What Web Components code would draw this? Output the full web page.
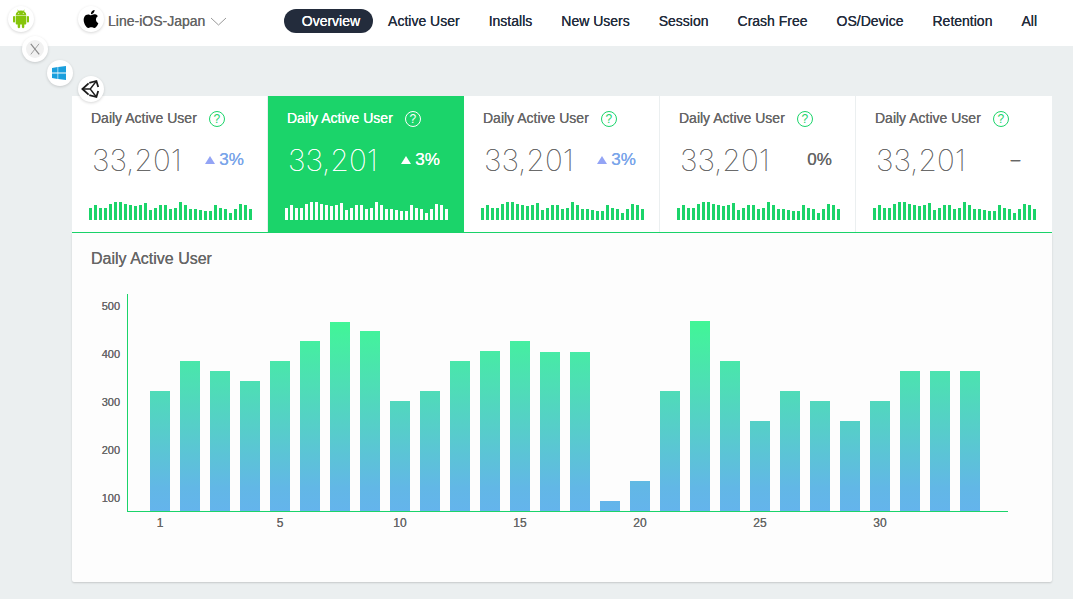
<!DOCTYPE html>
<html lang="en">
<head>
<meta charset="utf-8">
<meta name="viewport" content="width=device-width, initial-scale=1">
<title>Analytics Overview</title>
<style>
  body { margin: 0; min-height: 100vh; background: #ebeff0; color: #666; font-family: "Liberation Sans", Arial, sans-serif; font-size: 14px; text-shadow: 0 0 0 currentColor; }
</style>
</head>
<body>
<analytics-app></analytics-app>

<script>
const define = (name, html, init) => {
  const template = document.createElement('template');
  template.innerHTML = html;
  customElements.define(name, class extends HTMLElement {
    constructor() {
      super();
      this.attachShadow({ mode: 'open' }).append(template.content.cloneNode(true));
    }
    connectedCallback() { if (init) init(this, this.shadowRoot); }
  });
};

const ICONS = {
  Android: `<svg width="18" height="20" viewBox="0 0 18 20" fill="#86c50b">
    <path d="M3.7 6.4a5.3 5 0 0 1 10.6 0z"/>
    <path d="M5.7 .8l1.2 2M12.3 .8l-1.2 2" stroke="#86c50b" stroke-width=".7"/>
    <circle cx="6.7" cy="4.3" r=".55" fill="#fff"/><circle cx="11.3" cy="4.3" r=".55" fill="#fff"/>
    <path d="M3.7 7h10.6v7.6a1 1 0 0 1-1 1H4.7a1 1 0 0 1-1-1z"/>
    <rect x="1" y="7" width="2.1" height="6.6" rx="1"/><rect x="14.9" y="7" width="2.1" height="6.6" rx="1"/>
    <rect x="5.7" y="13" width="2.4" height="6.2" rx="1.1"/><rect x="9.9" y="13" width="2.4" height="6.2" rx="1.1"/></svg>`,
  Apple: `<svg width="18" height="18" viewBox="0 0 24 24"><path d="M12.152 6.896c-.948 0-2.415-1.078-3.96-1.04-2.04.027-3.91 1.183-4.961 3.014-2.117 3.675-.546 9.103 1.519 12.09 1.013 1.454 2.208 3.09 3.792 3.039 1.52-.065 2.09-.987 3.935-.987 1.831 0 2.35.987 3.96.948 1.637-.026 2.676-1.48 3.676-2.948 1.156-1.688 1.636-3.325 1.662-3.415-.039-.013-3.182-1.221-3.22-4.857-.026-3.04 2.48-4.494 2.597-4.559-1.429-2.09-3.623-2.324-4.39-2.376-2-.156-3.675 1.09-4.61 1.09zM15.53 3.83c.843-1.012 1.4-2.427 1.245-3.83-1.207.052-2.662.805-3.532 1.818-.78.896-1.454 2.338-1.273 3.714 1.338.104 2.715-.688 3.559-1.701"/></svg>`,
  'OS X': `<svg width="18" height="18" viewBox="0 0 18 18"><circle cx="9" cy="9" r="9" fill="#f1f1f1"/><path d="M4.8 3.8L13.2 14.4" stroke="#888" stroke-width="1.2"/><path d="M13 3.8L4.8 14.4" stroke="#999" stroke-width=".9"/></svg>`,
  Windows: `<svg width="16" height="16" viewBox="0 0 16 16" fill="#1a9fdd"><path d="M0 3l5.6-.9v5.5H0zM6.2 2L14 1v6.6H6.2zM0 8.4h5.6v5.5L0 13.1zM6.2 8.4H14V15l-7.8-1z"/></svg>`,
  Unity: `<svg width="20" height="20" viewBox="0 0 20 20" fill="none" stroke="#1b1b1b" stroke-width="1.8"><path d="M8.3 3.8L15.4 2l1.8 6M17.2 12l-1.8 6-7.1-1.8M7.6 4.4L1.4 10l6.2 5.6"/><path d="M1.4 10h7.8M15.2 2.2L9.2 10l6 7.8" stroke-width="1.4"/></svg>`
};

define('platform-button', `
  <style>
    :host { display: block; }
    button { display: grid; place-items: center; width: 26px; height: 26px; padding: 0; border: 0; border-radius: 50%; background: #fff; box-shadow: 0 1px 3px rgba(0,0,0,.16); cursor: pointer; }
    svg { display: block; }
  </style>
  <button type="button"></button>`,
  (host, root) => {
    const button = root.querySelector('button');
    button.setAttribute('aria-label', host.getAttribute('name'));
    button.innerHTML = ICONS[host.getAttribute('name')];
  });

define('app-picker', `
  <style>
    :host { display: flex; align-items: center; height: 24px; position: relative; }
    select { appearance: none; border: 0; margin: 0; padding: 0 24px 0 0; background: none; color: #666; font: inherit; line-height: 24px; text-shadow: inherit; cursor: pointer; }
    svg { margin-left: -20px; pointer-events: none; }
  </style>
  <select aria-label="Application"><option>Line-iOS-Japan</option></select>
  <svg width="17" height="9" viewBox="0 0 17 9" fill="none" stroke="#999"><path d="M1 1l7.5 7L16 1"/></svg>`);

define('nav-link', `
  <style>
    :host { display: block; }
    a { display: block; padding: 0 14px 0 15px; line-height: 24px; color: #232c3c; text-decoration: none; white-space: nowrap; }
    :host([current]) a { padding: 0 13px 0 18px; border-radius: 12px; background: #232c3c; color: #fff; }
  </style>
  <a href="#"><slot></slot></a>`,
  (host, root) => { if (host.hasAttribute('current')) root.querySelector('a').setAttribute('aria-current', 'page'); });

define('app-header', `
  <style>
    :host { display: block; position: relative; background: #fff; }
    header { display: flex; align-items: flex-start; box-sizing: border-box; min-height: 46px; padding: 6px 22px 0 8px; }
    app-picker { margin: 3px 0 0 4px; }
    .current { margin-left: 44px; }
    nav { display: flex; flex: 1; justify-content: flex-end; margin-top: 3px; }
    .fan platform-button { position: absolute; z-index: 1; }
    .fan [name="OS X"] { left: 22px; top: 36px; }
    .fan [name="Windows"] { left: 47px; top: 60px; }
    .fan [name="Unity"] { left: 78px; top: 76px; }
  </style>
  <header>
    <platform-button name="Android"></platform-button>
    <platform-button name="Apple" class="current"></platform-button>
    <app-picker></app-picker>
    <nav aria-label="Reports">
      <nav-link current>Overview</nav-link>
      <nav-link>Active User</nav-link>
      <nav-link>Installs</nav-link>
      <nav-link>New Users</nav-link>
      <nav-link>Session</nav-link>
      <nav-link>Crash Free</nav-link>
      <nav-link>OS/Device</nav-link>
      <nav-link>Retention</nav-link>
      <nav-link>All</nav-link>
    </nav>
  </header>
  <div class="fan">
    <platform-button name="OS X"></platform-button>
    <platform-button name="Windows"></platform-button>
    <platform-button name="Unity"></platform-button>
  </div>`);

const TREND = [12,15,12,12,16,18,18,16,15,14,15,17,10,12,15,15,11,12,18,15,11,11,10,9,9,15,12,11,7,11,16,15,11];

define('spark-line', `
  <style>
    :host { display: flex; align-items: flex-end; justify-content: space-between; height: 18px; }
    i { width: 3px; background: currentColor; }
  </style>`,
  (host, root) => TREND.forEach(value => {
    const bar = document.createElement('i');
    bar.style.height = value + 'px';
    root.append(bar);
  }));

define('stat-card', `
  <style>
    :host { display: block; flex: 1; box-sizing: border-box; min-width: 0; padding: 11px 15px 12px 17px; background: #fff; border-right: 1px solid #ebeff0; --accent: #1bd46a; --change: #666; }
    :host(:last-of-type) { border-right-color: #fff; }
    :host([trend="up"]) { --change: #7aa5ea; --arrow: #93a4f5; }
    :host([selected]) { background: #1bd46a; border-right-color: #1bd46a; color: #fff; --accent: #fff; --change: #fff; --arrow: #fff; }
    .title { display: flex; align-items: flex-start; gap: 12px; padding-left: 2px; height: 24px; }
    h2 { margin: 0; font-size: 14px; line-height: 22px; font-weight: 400; white-space: nowrap; }
    button { width: 16px; height: 16px; box-sizing: border-box; margin-top: 4px; padding: 0; border: 1px solid var(--accent); border-radius: 50%; background: none; color: var(--accent); font: 12px/14px "Liberation Sans", Arial, sans-serif; text-align: center; }
    .figures { display: flex; align-items: center; justify-content: space-between; height: 36px; margin: 11px 0 24px; padding: 0 8px 0 3px; }
    .value { font: 100 30px/36px Inter, "Liberation Sans", sans-serif; }
    .change { display: flex; align-items: center; gap: 4px; color: var(--change); font-size: 17px; line-height: 20px; }
    .change > span { min-width: 25px; text-align: center; }
    .arrow { display: none; width: 10px; height: 8px; fill: var(--arrow); }
    :host([trend="up"]) .arrow { display: block; }
    spark-line { color: var(--accent); }
  </style>
  <div class="title"><h2><slot></slot></h2><button type="button" aria-label="Help">?</button></div>
  <div class="figures">
    <span class="value"><slot name="value"></slot></span>
    <span class="change"><svg class="arrow" viewBox="0 0 10 8"><path d="M5 0l5 8H0z"/></svg><span><slot name="change"></slot></span></span>
  </div>
  <spark-line></spark-line>`);

const DAILY = [120,150,140,130,150,170,189,180,110,120,150,160,170,159,159,10,30,120,190,150,90,120,110,90,110,140,140,140];

define('bar-chart', `
  <style>
    :host { display: grid; grid-template-columns: 29px 1fr; column-gap: 7px; }
    .scale { display: flex; flex-direction: column; justify-content: space-between; padding-bottom: 2px; text-align: right; font-size: 11px; line-height: 24px; }
    .plot, .days { display: grid; grid-template-columns: repeat(28, 1fr); column-gap: 10px; padding: 0 28px 0 22px; }
    .plot { height: 217px; align-items: end; border-left: 1px solid #1bd46a; border-bottom: 1px solid #1bd46a; }
    .plot i { background: linear-gradient(to top, #64b4ec 0, #62b7e6 12%, #45efa0 90%, #40f696 100%) bottom / 100% 190px no-repeat; }
    .days { grid-column: 2; margin-left: 1px; font-size: 12px; line-height: 22px; }
    .days span { display: flex; justify-content: center; min-width: 0; }
  </style>
  <div class="scale"><span>500</span><span>400</span><span>300</span><span>200</span><span>100</span></div>
  <div class="plot"></div>
  <div class="days"></div>`,
  (host, root) => {
    DAILY.forEach(value => {
      const bar = document.createElement('i');
      bar.style.height = value + 'px';
      root.querySelector('.plot').append(bar);
    });
    [1, 5, 10, 15, 20, 25, 30].forEach((day, index) => {
      const label = document.createElement('span');
      label.textContent = day;
      label.style.gridColumn = index * 4 + 1;
      root.querySelector('.days').append(label);
    });
  });

define('chart-panel', `
  <style>
    :host { display: block; padding: 16px 44px 48px 19px; background: #fdfdfd; border-radius: 0 0 2px 2px; box-shadow: 0 1px 2px rgba(0,0,0,.16); }
    h1 { margin: 0 0 25px; font-size: 16px; line-height: 20px; font-weight: 400; }
  </style>
  <h1><slot name="title"></slot></h1>
  <slot></slot>`);

define('analytics-app', `
  <style>
    :host { display: block; }
    main { padding: 50px 21px 16px 72px; }
    .cards { display: flex; border-bottom: 1px solid #1bd46a; }
  </style>
  <app-header></app-header>
  <main>
    <section class="cards">
      <stat-card trend="up">Daily Active User<span slot="value">33,201</span><span slot="change">3%</span></stat-card>
      <stat-card trend="up" selected>Daily Active User<span slot="value">33,201</span><span slot="change">3%</span></stat-card>
      <stat-card trend="up">Daily Active User<span slot="value">33,201</span><span slot="change">3%</span></stat-card>
      <stat-card>Daily Active User<span slot="value">33,201</span><span slot="change">0%</span></stat-card>
      <stat-card>Daily Active User<span slot="value">33,201</span><span slot="change">–</span></stat-card>
    </section>
    <chart-panel><span slot="title">Daily Active User</span><bar-chart></bar-chart></chart-panel>
  </main>`);
</script>
</body>
</html>
